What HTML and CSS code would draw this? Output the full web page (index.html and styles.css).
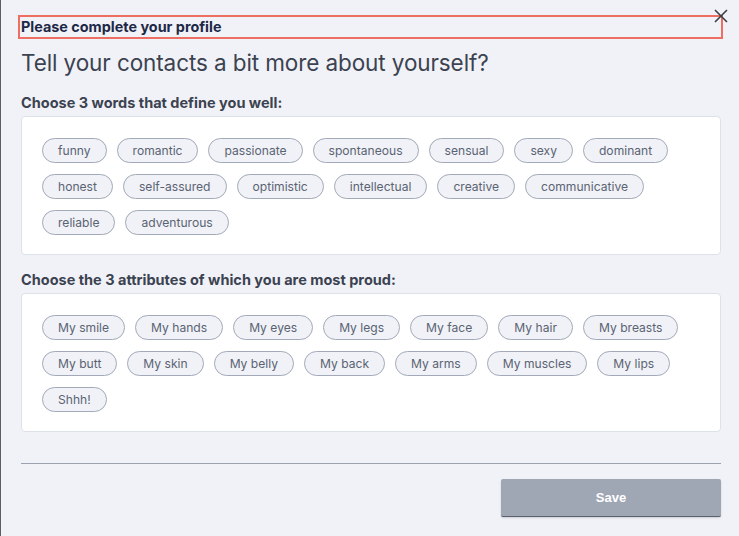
FILE: index.html
```html
<!DOCTYPE html>
<html lang="en">
<head>
<meta charset="utf-8">
<title>Complete your profile</title>
<link rel="stylesheet" href="styles.css">
</head>
<body>
<div class="modal">
  <button class="close" aria-label="Close">
    <svg width="14" height="14" viewBox="0 0 14 14"><path d="M1 1L13 13M13 1L1 13" stroke="#3c3f46" stroke-width="1.6" fill="none"/></svg>
  </button>
  <div class="content">
    <h1 class="header">Please complete your profile</h1>
    <h2 class="title">Tell your contacts a bit more about yourself?</h2>

    <h3 class="label">Choose 3 words that define you well:</h3>
    <div class="card">
      <div class="chips">
        <span class="chip">funny</span>
        <span class="chip">romantic</span>
        <span class="chip">passionate</span>
        <span class="chip">spontaneous</span>
        <span class="chip">sensual</span>
        <span class="chip">sexy</span>
        <span class="chip">dominant</span>
        <span class="chip">honest</span>
        <span class="chip">self-assured</span>
        <span class="chip">optimistic</span>
        <span class="chip">intellectual</span>
        <span class="chip">creative</span>
        <span class="chip">communicative</span>
        <span class="chip">reliable</span>
        <span class="chip">adventurous</span>
      </div>
    </div>

    <h3 class="label second">Choose the 3 attributes of which you are most proud:</h3>
    <div class="card">
      <div class="chips">
        <span class="chip">My smile</span>
        <span class="chip">My hands</span>
        <span class="chip">My eyes</span>
        <span class="chip">My legs</span>
        <span class="chip">My face</span>
        <span class="chip">My hair</span>
        <span class="chip">My breasts</span>
        <span class="chip">My butt</span>
        <span class="chip">My skin</span>
        <span class="chip">My belly</span>
        <span class="chip">My back</span>
        <span class="chip">My arms</span>
        <span class="chip">My muscles</span>
        <span class="chip">My lips</span>
        <span class="chip">Shhh!</span>
      </div>
    </div>

    <hr class="divider">
    <div class="actions">
      <button class="save">Save</button>
    </div>
  </div>
</div>
</body>
</html>
```

FILE: styles.css
```css
* { box-sizing: border-box; }
html, body { margin: 0; padding: 0; }
body {
  background: #f1f2f7;
  font-family: Inter, "Noto Sans", sans-serif;
  width: 739px;
  height: 536px;
  overflow: hidden;
}
.modal {
  position: relative;
  height: 536px;
  border-left: 1px solid #5e5e62;
  background: #f1f2f7;
}
.close {
  position: absolute;
  top: 8px;
  right: 10px;
  width: 16px;
  height: 16px;
  padding: 1px;
  border: 0;
  background: transparent;
  display: flex;
  align-items: center;
  justify-content: center;
}
.content {
  padding: 17px 18px 0 19px;
  display: flex;
  flex-direction: column;
}
.header {
  margin: 0;
  font-size: 14.4px;
  line-height: 20px;
  height: 20px;
  font-weight: 700;
  color: #1d2848;
  outline: 2px solid #ee6f61;
  padding-left: 1px;
}
.title {
  margin: 12px 0 0 1px;
  font-size: 22.5px;
  line-height: 28px;
  height: 28px;
  font-weight: 400;
  color: #3b4250;
  letter-spacing: -0.1px;
}
.label {
  margin: 17px 0 4px 1px;
  font-size: 14.5px;
  line-height: 18px;
  height: 18px;
  font-weight: 700;
  color: #3b4250;
}
.label.second { margin-top: 16px; }
.card {
  margin-left: 1px;
  background: #ffffff;
  border: 1px solid #dde1e9;
  border-radius: 4px;
  padding: 21px 20px 19px 20px;
  height: 139px;
}
.chips {
  display: flex;
  flex-wrap: wrap;
  gap: 11px 10px;
}
.chip {
  display: inline-block;
  font-size: 12.1px;
  line-height: 15px;
  height: 25px;
  color: #5b6373;
  background: #f0f2f7;
  border: 1px solid #a2a9b8;
  border-radius: 13px;
  padding: 4px 15px;
}
.divider {
  margin: 31px 0 0 1px;
  border: 0;
  border-top: 1px solid #9ba1ae;
  height: 0;
}
.actions {
  display: flex;
  justify-content: flex-end;
  margin-top: 15px;
}
.save {
  width: 220px;
  height: 38px;
  border: 0;
  border-bottom: 1px solid #5a6070;
  border-radius: 2px;
  background: #9fa7b5;
  color: #ffffff;
  font-family: "Liberation Sans", Arial, sans-serif;
  font-weight: 700;
  font-size: 13px;
  box-shadow: 0 1px 2px rgba(0,0,0,0.15);
}
```
